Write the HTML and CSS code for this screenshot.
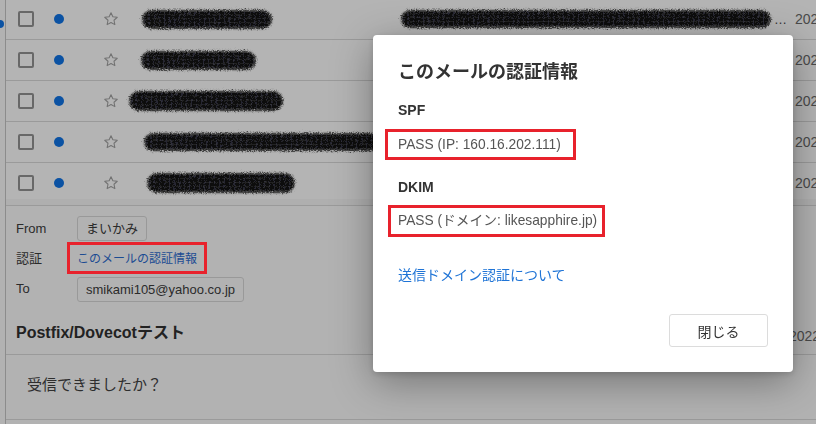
FILE: index.html
```html
<!DOCTYPE html>
<html lang="ja">
<head>
<meta charset="utf-8">
<title>メール</title>
<link rel="stylesheet" href="styles.css">
</head>
<body>
<svg class="defs" width="0" height="0" aria-hidden="true">
  <filter id="rough" x="-10%" y="-40%" width="120%" height="180%">
    <feTurbulence type="fractalNoise" baseFrequency="0.9" numOctaves="2" seed="3" result="n"/>
    <feDisplacementMap in="SourceGraphic" in2="n" scale="5" xChannelSelector="R" yChannelSelector="G"/>
  </filter>
</svg>
<div class="page">
  <aside class="side"><span class="side-dot"></span></aside>
  <main class="main">
    <div class="list-wrap">
      <ul class="list">
        <li class="row">
          <span class="check"></span><span class="dot"></span>
          <svg class="star" viewBox="0 0 24 24"><path d="M12 2.6l2.8 6 6.6.8-4.9 4.5 1.3 6.5L12 17.2l-5.8 3.2 1.3-6.5-4.9-4.5 6.6-.8z"/></svg>
          <span class="sender"><span class="blob" style="margin-left:25px;width:126px;height:15px"></span></span>
          <span class="subject"><span class="blob" style="width:366px;height:14px"></span><span class="ell">…</span></span>
          <span class="date">2022/03/04</span>
        </li>
        <li class="row">
          <span class="check"></span><span class="dot"></span>
          <svg class="star" viewBox="0 0 24 24"><path d="M12 2.6l2.8 6 6.6.8-4.9 4.5 1.3 6.5L12 17.2l-5.8 3.2 1.3-6.5-4.9-4.5 6.6-.8z"/></svg>
          <span class="sender"><span class="blob" style="margin-left:24px;width:111px;height:15px"></span></span>
          <span class="subject"></span>
          <span class="date">2022/03/04</span>
        </li>
        <li class="row">
          <span class="check"></span><span class="dot"></span>
          <svg class="star" viewBox="0 0 24 24"><path d="M12 2.6l2.8 6 6.6.8-4.9 4.5 1.3 6.5L12 17.2l-5.8 3.2 1.3-6.5-4.9-4.5 6.6-.8z"/></svg>
          <span class="sender"><span class="blob" style="margin-left:12px;width:150px;height:16px"></span></span>
          <span class="subject"></span>
          <span class="date">2022/03/04</span>
        </li>
        <li class="row">
          <span class="check"></span><span class="dot"></span>
          <svg class="star" viewBox="0 0 24 24"><path d="M12 2.6l2.8 6 6.6.8-4.9 4.5 1.3 6.5L12 17.2l-5.8 3.2 1.3-6.5-4.9-4.5 6.6-.8z"/></svg>
          <span class="sender"><span class="blob" style="margin-left:27px;width:250px;height:14px"></span></span>
          <span class="subject"></span>
          <span class="date">2022/03/04</span>
        </li>
        <li class="row">
          <span class="check"></span><span class="dot"></span>
          <svg class="star" viewBox="0 0 24 24"><path d="M12 2.6l2.8 6 6.6.8-4.9 4.5 1.3 6.5L12 17.2l-5.8 3.2 1.3-6.5-4.9-4.5 6.6-.8z"/></svg>
          <span class="sender"><span class="blob" style="margin-left:30px;width:144px;height:16px"></span></span>
          <span class="subject"></span>
          <span class="date">2022/03/04</span>
        </li>
      </ul>
    </div>
    <section class="detail">
      <dl class="meta">
        <dt>From</dt><dd><span class="chip">まいかみ</span></dd>
        <dt>認証</dt><dd><a class="auth-link">このメールの認証情報</a></dd>
        <dt>To</dt><dd><span class="chip">smikami105@yahoo.co.jp</span></dd>
      </dl>
      <div class="subject-row">
        <h2 class="subject-title">Postfix/Dovecotテスト</h2>
        <span class="subject-date">2022/03/04 10:12</span>
      </div>
      <div class="body-text">受信できましたか？</div>
    </section>
  </main>
</div>

<div class="modal" role="dialog">
  <h1 class="modal-title">このメールの認証情報</h1>
  <h3 class="label spf">SPF</h3>
  <div class="value value-spf">PASS (IP: 160.16.202.111)</div>
  <h3 class="label dkim">DKIM</h3>
  <div class="value value-dkim">PASS (ドメイン: likesapphire.jp)</div>
  <a class="modal-link">送信ドメイン認証について</a>
  <div class="modal-actions"><button class="close-btn">閉じる</button></div>
</div>
</body>
</html>
```
FILE: styles.css
```css
html, body {
  margin: 0;
  padding: 0;
  width: 816px;
  height: 424px;
  overflow: hidden;
  background: #b2b2b2;
  font-family: "Liberation Sans", "Noto Sans CJK JP", sans-serif;
  color: #2b2b2b;
}

.defs {
  position: absolute;
  width: 0;
  height: 0;
}

.page {
  display: flex;
  height: 424px;
  overflow: hidden;
}

.side {
  width: 5px;
  flex-shrink: 0;
  border-right: 1px solid #8c8c8c;
  position: relative;
}

.side-dot {
  position: absolute;
  left: -4px;
  top: 20px;
  width: 8px;
  height: 8px;
  border-radius: 50%;
  background: #0b52a3;
}

.main {
  flex: 1;
  min-width: 0;
  overflow: hidden;
}

.list-wrap {
  height: 200px;
  margin-top: -1px;
  overflow: hidden;
  background: #b4b4b4;
  border-bottom: 6px solid #afafaf;
}

.list {
  list-style: none;
  margin: 0;
  padding: 0;
}

.row {
  display: flex;
  align-items: center;
  height: 40px;
  border-bottom: 1px solid #9a9a9a;
  padding-left: 12px;
  white-space: nowrap;
}

.check {
  width: 12px;
  height: 12px;
  border: 2px solid #686868;
  border-radius: 2px;
  flex-shrink: 0;
}

.dot {
  width: 10px;
  height: 10px;
  border-radius: 50%;
  background: #0b52a3;
  margin-left: 20px;
  flex-shrink: 0;
}

.star {
  width: 16px;
  height: 16px;
  margin-left: 39px;
  flex-shrink: 0;
  fill: none;
  stroke: #727272;
  stroke-width: 1.6;
  stroke-linejoin: round;
}

.sender {
  width: 284px;
  flex-shrink: 0;
  display: flex;
  align-items: center;
}

.subject {
  flex: 1;
  min-width: 0;
  display: flex;
  align-items: center;
}

.blob {
  display: inline-block;
  flex-shrink: 0;
  border-radius: 8px;
  background-color: #0e0e0e;
  background-image:
    repeating-linear-gradient(90deg, rgba(70,70,90,.45) 0 1px, transparent 1px 5px),
    repeating-linear-gradient(0deg, rgba(50,50,50,.5) 0 1px, transparent 1px 4px);
  box-shadow: 0 0 2px 2px rgba(10,10,10,.8);
  filter: url(#rough);
}

.ell {
  margin-left: 5px;
  font-size: 13px;
  color: #333;
}

.date {
  width: 21px;
  flex-shrink: 0;
  font-size: 14px;
  color: #4a4a4a;
  overflow: visible;
}

.detail {
  border-top: 1px solid #9a9a9a;
  padding-top: 10px;
}

.meta {
  display: grid;
  grid-template-columns: 61px 1fr;
  grid-template-rows: 25px 33px 28px;
  align-items: end;
  margin: 0;
  padding-left: 10px;
  font-size: 13px;
}

.meta dt {
  align-self: center;
  color: #2b2b2b;
}

.meta dd {
  margin: 0;
  display: flex;
}

.chip {
  display: inline-block;
  height: 23px;
  line-height: 23px;
  padding: 0 8px;
  border: 1px solid #999;
  border-radius: 3px;
  font-size: 13px;
  color: #2b2b2b;
}

.auth-link {
  display: inline-block;
  margin-left: -10px;
  border: 3px solid #e8222c;
  padding: 0 7px;
  height: 26px;
  line-height: 26px;
  font-size: 12px;
  color: #1c4c92;
  font-family: "Noto Sans CJK JP", sans-serif;
}

.subject-row {
  display: flex;
  align-items: center;
  margin-top: 20px;
  padding: 0 0 10px 10px;
  border-bottom: 1px solid #9a9a9a;
  white-space: nowrap;
}

.subject-title {
  flex: 1;
  margin: 0;
  font-size: 16px;
  line-height: 22px;
  font-weight: bold;
  color: #222;
}

.subject-date {
  width: 27px;
  flex-shrink: 0;
  font-size: 14px;
  color: #4a4a4a;
  position: relative;
  top: 3px;
}

.body-text {
  padding: 18px 0 24px 21px;
  font-size: 15px;
  line-height: 22px;
  color: #2e2e2e;
  font-family: "Noto Sans CJK JP", sans-serif;
  border-bottom: 1px solid #9a9a9a;
}

/* modal */
.modal {
  position: fixed;
  left: 373px;
  top: 35px;
  width: 370px;
  padding: 22px 25px 25px;
  background: #fff;
  border-radius: 4px;
  box-shadow: 0 10px 40px rgba(0,0,0,.35), 0 2px 6px rgba(0,0,0,.15);
}

.modal-title {
  margin: 0;
  font-size: 18px;
  line-height: 26px;
  font-weight: bold;
  color: #333;
  font-family: "Noto Sans CJK JP", sans-serif;
}

.label {
  margin: 17px 0 0;
  font-size: 14px;
  line-height: 20px;
  font-weight: bold;
  color: #333;
}

.value {
  display: table;
  border: 3px solid #e8222c;
  font-size: 13.75px;
  color: #555;
  white-space: nowrap;
}

.value-spf {
  margin: 9px 0 0 -13px;
  padding: 7px 12px 7px 10px;
  line-height: 11px;
  height: 11px;
}

.value-dkim {
  margin: 8px 0 0 -10px;
  padding: 6px 5px 6px 7px;
  line-height: 14px;
  height: 14px;
}

.modal-link {
  display: block;
  margin-top: 27px;
  font-size: 14px;
  line-height: 20px;
  color: #1f74d6;
  font-family: "Noto Sans CJK JP", sans-serif;
}

.modal-actions {
  display: flex;
  justify-content: flex-end;
  margin-top: 30px;
}

.close-btn {
  width: 99px;
  height: 33px;
  border: 1px solid #dcdcdc;
  border-radius: 3px;
  background: #fff;
  font-size: 14px;
  color: #333;
  font-family: "Noto Sans CJK JP", sans-serif;
  padding: 0;
}
```
